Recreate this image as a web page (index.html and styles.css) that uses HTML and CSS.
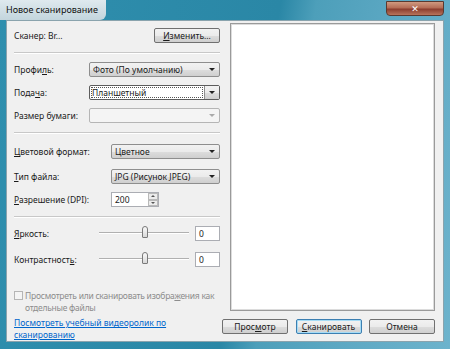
FILE: index.html
```html
<!DOCTYPE html>
<html lang="ru">
<head>
    <meta charset="UTF-8">
    <title>Новое сканирование</title>
    <link rel="stylesheet" href="styles.css">
</head>
<body>
<div class="window">
    <div class="titlebar">
        <span class="title">Новое сканирование</span>
        <span class="close">&#x2715;</span>
    </div>
    <div class="client">
        <div class="left">
            <div class="row scanner">
                <span>Сканер: Br...</span>
                <span class="btn change"><u>И</u>зменить...</span>
            </div>
            <div class="sep"></div>
            <div class="group g1">
                <div class="row">
                    <span class="lbl">Профи<u>л</u>ь:</span>
                    <span class="select w1">Фото (По умолчанию)<i class="arrow"></i></span>
                </div>
                <div class="row">
                    <span class="lbl">Пода<u>ч</u>а:</span>
                    <span class="select w1 focused"><b class="sel">Планшетный</b><i class="arrow split"></i></span>
                </div>
                <div class="row">
                    <span class="lbl">Размер бумаги:</span>
                    <span class="select w1 disabled"><i class="arrow"></i></span>
                </div>
            </div>
            <div class="sep s2"></div>
            <div class="group g2">
                <div class="row">
                    <span class="lbl"><u>Ц</u>ветовой формат:</span>
                    <span class="select w2">Цветное<i class="arrow"></i></span>
                </div>
                <div class="row r-type">
                    <span class="lbl"><u>Т</u>ип файла:</span>
                    <span class="select w2">JPG (Рисунок JPEG)<i class="arrow"></i></span>
                </div>
                <div class="row r-dpi">
                    <span class="lbl"><u>Р</u>азрешение (DPI):</span>
                    <span class="spin"><span class="val">200</span><span class="spinbtns"><i class="up"></i><i class="down"></i></span></span>
                </div>
            </div>
            <div class="sep s3"></div>
            <div class="group g3">
                <div class="row">
                    <span class="lbl"><u>Я</u>ркость:</span>
                    <span class="slider"><i class="track"></i><i class="thumb"></i></span>
                    <span class="num">0</span>
                </div>
                <div class="row">
                    <span class="lbl">Контрастност<u>ь</u>:</span>
                    <span class="slider"><i class="track"></i><i class="thumb"></i></span>
                    <span class="num">0</span>
                </div>
            </div>
            <div class="check">
                <span class="box"></span>
                <span>Просмотреть или сканировать изобра<u>ж</u>ения как<br>отдельные файлы</span>
            </div>
            <a class="link">Посмотреть учебный видеоролик по<br>сканированию</a>
        </div>
        <div class="right">
            <div class="preview"></div>
            <div class="buttons">
                <span class="btn">Прос<u>м</u>отр</span>
                <span class="btn default"><u>С</u>канировать</span>
                <span class="btn">Отмена</span>
            </div>
        </div>
    </div>
</div>
</body>
</html>
```
FILE: styles.css
```css
*{
    margin: 0;
    padding: 0;
    box-sizing: border-box;
}
body
{
    font-family: "Noto Sans", "DejaVu Sans", sans-serif;
    font-size: 8.5px;
    color: #1a1a1a;
    background: #fff;
}
.window
{
    width: 450px;
    height: 349px;
    display: flex;
    flex-direction: column;
    background: linear-gradient(100deg, #2f8fae 0%, #2a87a6 55%, #4d9fba 62%, #5ea9c4 80%, #6db3cc 100%);
    padding: 0 6px 7px 6px;
}
.titlebar
{
    height: 20px;
    display: flex;
    align-items: center;
    justify-content: space-between;
    margin: 0 -6px;
    padding: 0 6px 0 0;
}
.title
{
    height: 20px;
    line-height: 20px;
    padding: 0 8px 0 6px;
    font-size: 9px;
    color: #111;
    background: linear-gradient(#dfe9ee, #c3d5dd);
    border-radius: 0 0 6px 0;
}
.close
{
    width: 58px;
    height: 15px;
    margin-top: -4px;
    border-radius: 0 0 4px 4px;
    border: 1px solid #5a3a30;
    background: linear-gradient(#d09a80 0%, #b46c55 45%, #8c3e2e 55%, #b8745c 100%);
    color: #fff;
    font-size: 9px;
    font-weight: bold;
    text-align: center;
    line-height: 13px;
}
.client
{
    flex: 1;
    display: flex;
    background: #f0f0f0;
    border: 1px solid #8aa3ad;
}
.left
{
    width: 213px;
    padding: 7px 0 0 7px;
    display: flex;
    flex-direction: column;
}
.group
{
    display: flex;
    flex-direction: column;
    gap: 8px;
}
.g1
{
    margin-top: 8px;
}
.g2
{
    margin-top: 10px;
}
.r-type
{
    margin-top: 2px;
}
.g3
{
    margin-top: 8px;
    gap: 11px;
}
.row
{
    display: flex;
    align-items: center;
    justify-content: space-between;
    height: 15px;
}
.lbl
{
    white-space: nowrap;
}
.sep
{
    height: 2px;
    background: #c8c8c8;
    border-bottom: 1px solid #fff;
    margin-top: 9px;
}
.btn
{
    display: inline-block;
    width: 66px;
    height: 15px;
    line-height: 13px;
    text-align: center;
    border: 1px solid #707070;
    border-radius: 2px;
    background: linear-gradient(#f2f2f2 0%, #ebebeb 50%, #dddddd 51%, #cfcfcf 100%);
}
.select
{
    position: relative;
    height: 15px;
    line-height: 13px;
    padding-left: 3px;
    border: 1px solid #8e8e8e;
    border-radius: 2px;
    background: linear-gradient(#f2f2f2 0%, #ebebeb 50%, #dddddd 51%, #cfcfcf 100%);
}
.w1
{
    width: 131px;
}
.w2
{
    width: 109px;
}
.focused
{
    background: #fff;
    border-color: #5c5c5c;
    padding-left: 1px;
}
.sel
{
    font-weight: normal;
    display: inline-block;
    width: 112px;
    height: 11px;
    line-height: 10px;
    margin-top: 1px;
    border: 1px dotted #555;
    vertical-align: top;
}
.disabled
{
    background: #f4f4f4;
    border-color: #b5b5b5;
}
.arrow
{
    position: absolute;
    right: 4px;
    top: 5px;
    border-left: 3px solid transparent;
    border-right: 3px solid transparent;
    border-top: 3px solid #222;
}
.disabled .arrow
{
    border-top-color: #aaa;
}
.split
{
    right: 0;
    top: 0;
    width: 15px;
    height: 13px;
    border: none;
    border-left: 1px solid #8e8e8e;
    background: linear-gradient(#f2f2f2 0%, #ebebeb 50%, #dddddd 51%, #cfcfcf 100%);
}
.split::after
{
    content: "";
    position: absolute;
    left: 4px;
    top: 5px;
    border-left: 3px solid transparent;
    border-right: 3px solid transparent;
    border-top: 3px solid #222;
}
.spin
{
    display: flex;
    width: 48px;
    height: 15px;
    border: 1px solid #abadb3;
    background: #fff;
    margin-right: 61px;
}
.val
{
    flex: 1;
    padding-left: 3px;
    line-height: 13px;
}
.spinbtns
{
    width: 10px;
    display: flex;
    flex-direction: column;
}
.spinbtns i
{
    flex: 1;
    border: 1px solid #b9b9b9;
    background: #ececec;
    position: relative;
}
.spinbtns i::after
{
    content: "";
    position: absolute;
    left: 2px;
    top: 1px;
    border-left: 2px solid transparent;
    border-right: 2px solid transparent;
}
.up::after
{
    border-bottom: 2px solid #555;
}
.down::after
{
    border-top: 2px solid #555;
}
.g3 .lbl
{
    width: 85px;
}
.slider
{
    position: relative;
    width: 90px;
    height: 15px;
    margin-right: 6px;
}
.track
{
    position: absolute;
    left: 0;
    right: 0;
    top: 6px;
    height: 2px;
    border-top: 1px solid #b0b0b0;
    border-bottom: 1px solid #fff;
}
.thumb
{
    position: absolute;
    left: 43px;
    top: 0;
    width: 6px;
    height: 12px;
    border: 1px solid #7a7a7a;
    border-radius: 3px 3px 1px 1px;
    background: linear-gradient(#fafafa, #d8d8d8);
}
.num
{
    width: 25px;
    height: 15px;
    line-height: 13px;
    padding-left: 3px;
    border: 1px solid #abadb3;
    background: #fff;
}
.check
{
    display: flex;
    margin-top: 23px;
    color: #8d8d8d;
    line-height: 12px;
    white-space: nowrap;
    letter-spacing: -0.25px;
}
.box
{
    flex: none;
    width: 9px;
    height: 9px;
    margin: 1px 2px 0 0;
    border: 1px solid #b5b5b5;
    background: #f4f4f4;
}
.link
{
    display: block;
    margin-top: 3px;
    line-height: 12px;
    white-space: nowrap;
    color: #0066cc;
    text-decoration: underline;
}
.right
{
    flex: 1;
    display: flex;
    flex-direction: column;
    padding: 2px 8px 7px 2px;
}
.preview
{
    flex: 1;
    margin-left: 8px;
    border: 1px solid #9a9a9a;
    box-shadow: inset 0 0 0 1px #dcdcdc;
    background: #fff;
}
.buttons
{
    display: flex;
    justify-content: space-between;
    margin-top: 8px;
}
.default
{
    border-color: #3c7fb1;
    box-shadow: inset 0 0 0 1px #a6dcf6;
}
```
